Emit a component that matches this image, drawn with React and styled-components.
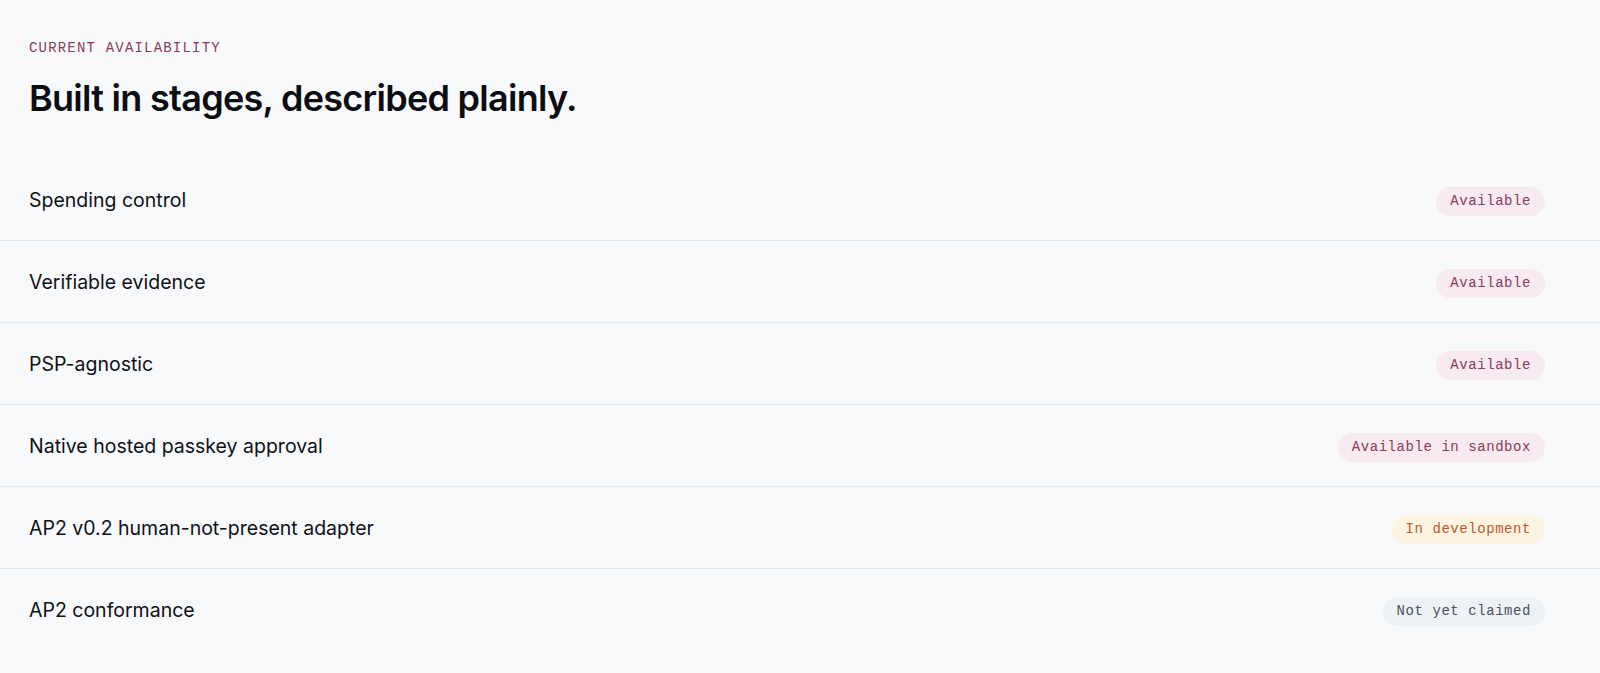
import React from 'react';
import styled, { createGlobalStyle } from 'styled-components';

const GlobalStyle = createGlobalStyle`
  html, body {
    margin: 0;
    padding: 0;
    background: #f8f9fb;
  }
  body {
    font-family: Inter, "Noto Sans", sans-serif;
    color: #0d0f14;
    -webkit-font-smoothing: antialiased;
  }
`;

const Section = styled.section`
  min-height: 673px;
  background: #f8f9fb;
  padding-top: 38px;
  box-sizing: border-box;
`;

const Header = styled.header`
  padding: 0 29px;
  display: flex;
  flex-direction: column;
  gap: 18px;
  margin-bottom: 39px;
`;

const Eyebrow = styled.div`
  font-family: "Liberation Mono", "DejaVu Sans Mono", monospace;
  font-size: 14px;
  line-height: 20px;
  letter-spacing: 0.085em;
  text-transform: uppercase;
  color: #8b3b5c;
`;

const Title = styled.h2`
  margin: 0;
  font-size: 36px;
  line-height: 44px;
  font-weight: 600;
  letter-spacing: -0.02em;
  color: #0b0d12;
`;

const List = styled.ul`
  list-style: none;
  margin: 0;
  padding: 0;
`;

const Row = styled.li`
  display: flex;
  align-items: center;
  justify-content: space-between;
  height: 82px;
  box-sizing: border-box;
  padding: 0 55px 0 29px;
  border-bottom: 1px solid ${({ $last }) => ($last ? 'transparent' : '#e2e6ea')};
`;

const Name = styled.span`
  font-size: 19.5px;
  font-weight: 400;
  letter-spacing: 0;
  color: #0f1117;
`;

const tones = {
  live: { fg: '#8a3b5b', bg: '#f7eaf0' },
  dev: { fg: '#c2572b', bg: '#fdf5e2' },
  none: { fg: '#4a525e', bg: '#eef1f5' },
};

const Badge = styled.span`
  margin-top: 4px;
  font-family: "Liberation Mono", "DejaVu Sans Mono", monospace;
  font-size: 14px;
  line-height: 29px;
  letter-spacing: 0.04em;
  padding: 0 14px;
  border-radius: 15px;
  color: ${({ $tone }) => tones[$tone].fg};
  background: ${({ $tone }) => tones[$tone].bg};
  white-space: nowrap;
`;

const items = [
  { name: 'Spending control', status: 'Available', tone: 'live' },
  { name: 'Verifiable evidence', status: 'Available', tone: 'live' },
  { name: 'PSP-agnostic', status: 'Available', tone: 'live' },
  { name: 'Native hosted passkey approval', status: 'Available in sandbox', tone: 'live' },
  { name: 'AP2 v0.2 human-not-present adapter', status: 'In development', tone: 'dev' },
  { name: 'AP2 conformance', status: 'Not yet claimed', tone: 'none' },
];

export default function App() {
  return (
    <>
      <GlobalStyle />
      <Section>
        <Header>
          <Eyebrow>Current availability</Eyebrow>
          <Title>Built in stages, described plainly.</Title>
        </Header>
        <List>
          {items.map((item, i) => (
            <Row key={item.name} $last={i === items.length - 1}>
              <Name>{item.name}</Name>
              <Badge $tone={item.tone}>{item.status}</Badge>
            </Row>
          ))}
        </List>
      </Section>
    </>
  );
}
